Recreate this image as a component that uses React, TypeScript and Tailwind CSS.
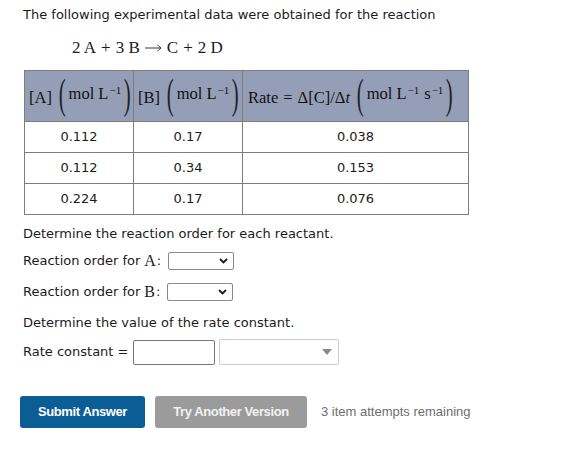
import React from 'react';

const body = { fontFamily: '"DejaVu Sans", Verdana, sans-serif' };
const serif = { fontFamily: '"Liberation Serif", "DejaVu Serif", serif' };
const arial = { fontFamily: '"Liberation Sans", Arial, sans-serif' };

function Paren({ side }: { side: 'l' | 'r' }) {
  return (
    <span
      className="inline-block text-[26px] leading-none scale-x-[0.8] scale-y-[1.6] text-[#222]"
      style={serif}
    >
      {side === 'l' ? '(' : ')'}
    </span>
  );
}

function Unit({ withSec }: { withSec?: boolean }) {
  return (
    <span className="inline-flex items-center ml-[6px]">
      <Paren side="l" />
      <span className="mx-[2px]">
        mol L<sup className="text-[11px] ml-[1px]">−1</sup>
        {withSec && (
          <>
            <span className="ml-[5px]">s</span>
            <sup className="text-[11px] ml-[1px]">−1</sup>
          </>
        )}
      </span>
      <Paren side="r" />
    </span>
  );
}

function Chevron() {
  return (
    <svg width="9" height="6" viewBox="0 0 9 6" className="shrink-0">
      <path d="M1 1l3.5 3.5L8 1" fill="none" stroke="#1a1a1a" strokeWidth="1.8" />
    </svg>
  );
}

function SmallSelect() {
  return (
    <span className="ml-[7px] inline-flex items-center justify-end w-[66px] h-[18px] border border-[#8a8a8a] rounded-[2px] bg-white pr-[5px]">
      <Chevron />
    </span>
  );
}

function Arrow() {
  return (
    <svg width="17" height="8" viewBox="0 0 17 8" className="inline-block mx-[5px] align-middle">
      <path d="M0 4h15.5M12.5 1l3.5 3-3.5 3" fill="none" stroke="#222" strokeWidth="0.9" />
    </svg>
  );
}

function Plus() {
  return <span className="mx-[5px]">+</span>;
}

const rows = [
  ['0.112', '0.17', '0.038'],
  ['0.112', '0.34', '0.153'],
  ['0.224', '0.17', '0.076'],
];

export default function App() {
  return (
    <div className="w-[588px] h-[467px] bg-white text-[13px] text-[#1b1b1b] pl-[23px] pt-[6px]" style={body}>
      <p className="h-[18px] leading-[18px]">The following experimental data were obtained for the reaction</p>

      <div className="mt-[12px] ml-[49px] h-[24px] leading-[24px] text-[17px] flex items-center" style={serif}>
        <span>2 A</span>
        <Plus />
        <span>3 B</span>
        <Arrow />
        <span>C</span>
        <Plus />
        <span>2 D</span>
      </div>

      <table className="mt-[10px] ml-[1px] border-collapse w-[444px] table-fixed">
        <colgroup>
          <col className="w-[109px]" />
          <col className="w-[109px]" />
          <col className="w-[226px]" />
        </colgroup>
        <thead>
          <tr className="h-[51px] bg-[#949fb7] text-[16.5px] text-[#111]" style={serif}>
            <th className="border border-[#7d7d7d] font-normal text-left pl-[4px] whitespace-nowrap">
              [A]
              <Unit />
            </th>
            <th className="border border-[#7d7d7d] font-normal text-left pl-[4px] whitespace-nowrap">
              [B]
              <Unit />
            </th>
            <th className="border border-[#7d7d7d] font-normal text-left pl-[5px] whitespace-nowrap">
              Rate<span className="mx-[5px]">=</span>Δ[C]/Δ<i>t</i>
              <Unit withSec />
            </th>
          </tr>
        </thead>
        <tbody>
          {rows.map((r, i) => (
            <tr key={i} className="h-[31px]">
              {r.map((c, j) => (
                <td key={j} className="border border-[#7d7d7d] text-center">
                  {c}
                </td>
              ))}
            </tr>
          ))}
        </tbody>
      </table>

      <p className="mt-[10px] h-[18px] leading-[18px]">Determine the reaction order for each reactant.</p>

      <div className="mt-[9px] h-[18px] flex items-center">
        <span>Reaction order for </span>
        <span className="ml-[4px] text-[16px]" style={serif}>A</span>
        <span className="ml-[1px]">:</span>
        <SmallSelect />
      </div>

      <div className="mt-[13px] h-[18px] flex items-center">
        <span>Reaction order for </span>
        <span className="ml-[4px] text-[16px]" style={serif}>B</span>
        <span className="ml-[1px]">:</span>
        <SmallSelect />
      </div>

      <p className="mt-[13px] h-[18px] leading-[18px]">Determine the value of the rate constant.</p>

      <div className="mt-[7px] flex items-center h-[26px]">
        <span>Rate constant =</span>
        <span className="ml-[5px] w-[82px] h-[25px] border border-[#767676] rounded-[2px] bg-white" />
        <span className="ml-[4px] w-[120px] h-[26px] border border-[#cccccc] rounded-[2px] bg-white flex items-center justify-end pr-[6px]">
          <svg width="10" height="6" viewBox="0 0 10 6">
            <path d="M0 0h10L5 6z" fill="#8a8a8a" />
          </svg>
        </span>
      </div>

      <div className="mt-[31px] -ml-[3px] flex items-center" style={arial}>
        <button className="w-[125px] h-[32px] rounded-[3px] bg-[#0b5d96] text-white font-bold text-[13px] tracking-[-0.4px]">
          Submit Answer
        </button>
        <button className="ml-[10px] w-[152px] h-[32px] rounded-[3px] bg-[#9b9b9b] text-[#f2f2f2] font-bold text-[13px] tracking-[-0.4px]">
          Try Another Version
        </button>
        <span className="ml-[14px] text-[13px] text-[#6e6e6e]">3 item attempts remaining</span>
      </div>
    </div>
  );
}
